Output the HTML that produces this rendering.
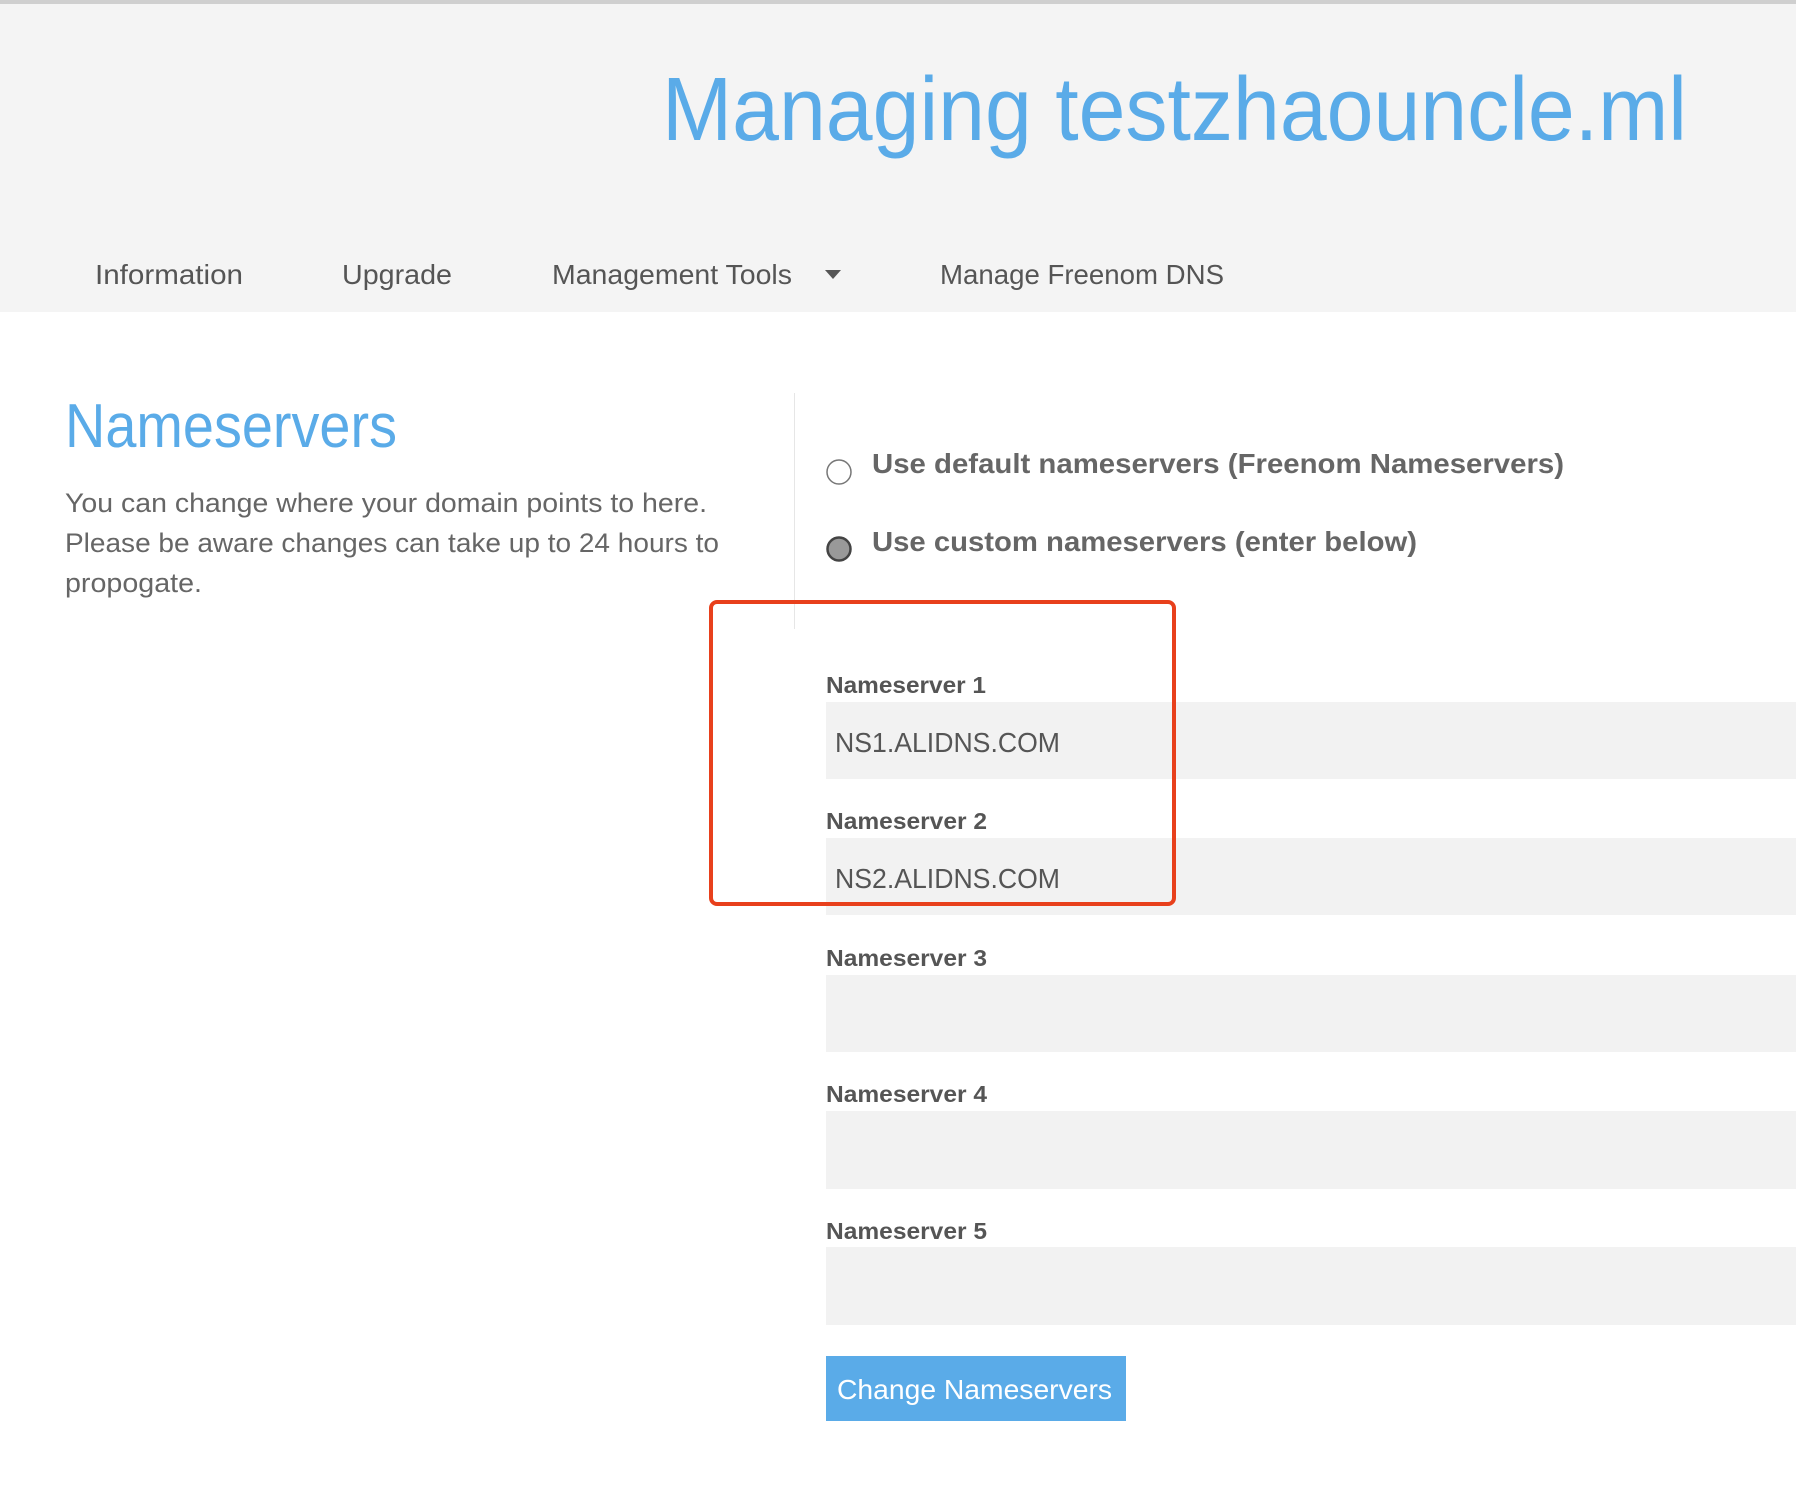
<!DOCTYPE html>
<html><head><meta charset="utf-8"><style>
html,body{margin:0;padding:0;background:#fff;}
svg{display:block;}
text{font-family:"Liberation Sans",sans-serif;}
</style></head><body>
<svg width="1796" height="1496" viewBox="0 0 1796 1496" xmlns="http://www.w3.org/2000/svg">
<rect x="0" y="0" width="1796" height="312" fill="#f4f4f4"/>
<rect x="0" y="0" width="1796" height="4" fill="#cfcfcf"/>
<text x="662" y="140" font-size="90" fill="#5aabe8" textLength="1025" lengthAdjust="spacingAndGlyphs">Managing testzhaouncle.ml</text>
<g font-size="28" fill="#555">
<text x="95" y="284" textLength="148" lengthAdjust="spacingAndGlyphs">Information</text>
<text x="342" y="284" textLength="110" lengthAdjust="spacingAndGlyphs">Upgrade</text>
<text x="552" y="284" textLength="240" lengthAdjust="spacingAndGlyphs">Management Tools</text>
<text x="940" y="284" textLength="284" lengthAdjust="spacingAndGlyphs">Manage Freenom DNS</text>
</g>
<path d="M825 270 L841 270 L833 279 Z" fill="#555"/>
<text x="65" y="447" font-size="62" fill="#5aabe8" textLength="332" lengthAdjust="spacingAndGlyphs">Nameservers</text>
<g font-size="27" fill="#666">
<text x="65" y="512" textLength="642" lengthAdjust="spacingAndGlyphs">You can change where your domain points to here.</text>
<text x="65" y="552" textLength="654" lengthAdjust="spacingAndGlyphs">Please be aware changes can take up to 24 hours to</text>
<text x="65" y="592" textLength="137" lengthAdjust="spacingAndGlyphs">propogate.</text>
</g>
<rect x="794" y="393" width="1" height="236" fill="#e6e6e6"/>
<circle cx="839" cy="472" r="12" fill="#fff" stroke="#777" stroke-width="1.5"/>
<circle cx="839" cy="549" r="11.5" fill="#999" stroke="#444" stroke-width="2.5"/>
<g font-size="28" font-weight="bold" fill="#666">
<text x="872" y="473" textLength="692" lengthAdjust="spacingAndGlyphs">Use default nameservers (Freenom Nameservers)</text>
<text x="872" y="551" textLength="545" lengthAdjust="spacingAndGlyphs">Use custom nameservers (enter below)</text>
</g>
<g fill="#f2f2f2">
<rect x="826" y="702" width="970" height="77"/>
<rect x="826" y="838" width="970" height="77"/>
<rect x="826" y="975" width="970" height="77"/>
<rect x="826" y="1111" width="970" height="78"/>
<rect x="826" y="1247" width="970" height="78"/>
</g>
<g font-size="23" font-weight="bold" fill="#555">
<text x="826" y="693" textLength="160" lengthAdjust="spacingAndGlyphs">Nameserver 1</text>
<text x="826" y="829" textLength="161" lengthAdjust="spacingAndGlyphs">Nameserver 2</text>
<text x="826" y="966" textLength="161" lengthAdjust="spacingAndGlyphs">Nameserver 3</text>
<text x="826" y="1102" textLength="161" lengthAdjust="spacingAndGlyphs">Nameserver 4</text>
<text x="826" y="1239" textLength="161" lengthAdjust="spacingAndGlyphs">Nameserver 5</text>
</g>
<g font-size="28" fill="#555">
<text x="835" y="752" textLength="225" lengthAdjust="spacingAndGlyphs">NS1.ALIDNS.COM</text>
<text x="835" y="888" textLength="225" lengthAdjust="spacingAndGlyphs">NS2.ALIDNS.COM</text>
</g>
<rect x="826" y="1356" width="300" height="65" fill="#5aabe8"/>
<text x="837" y="1399" font-size="28" fill="#fff" textLength="275" lengthAdjust="spacingAndGlyphs">Change Nameservers</text>
<rect x="711" y="602" width="463" height="302" rx="6" ry="6" fill="none" stroke="#e8401c" stroke-width="4"/>
</svg>
</body></html>
